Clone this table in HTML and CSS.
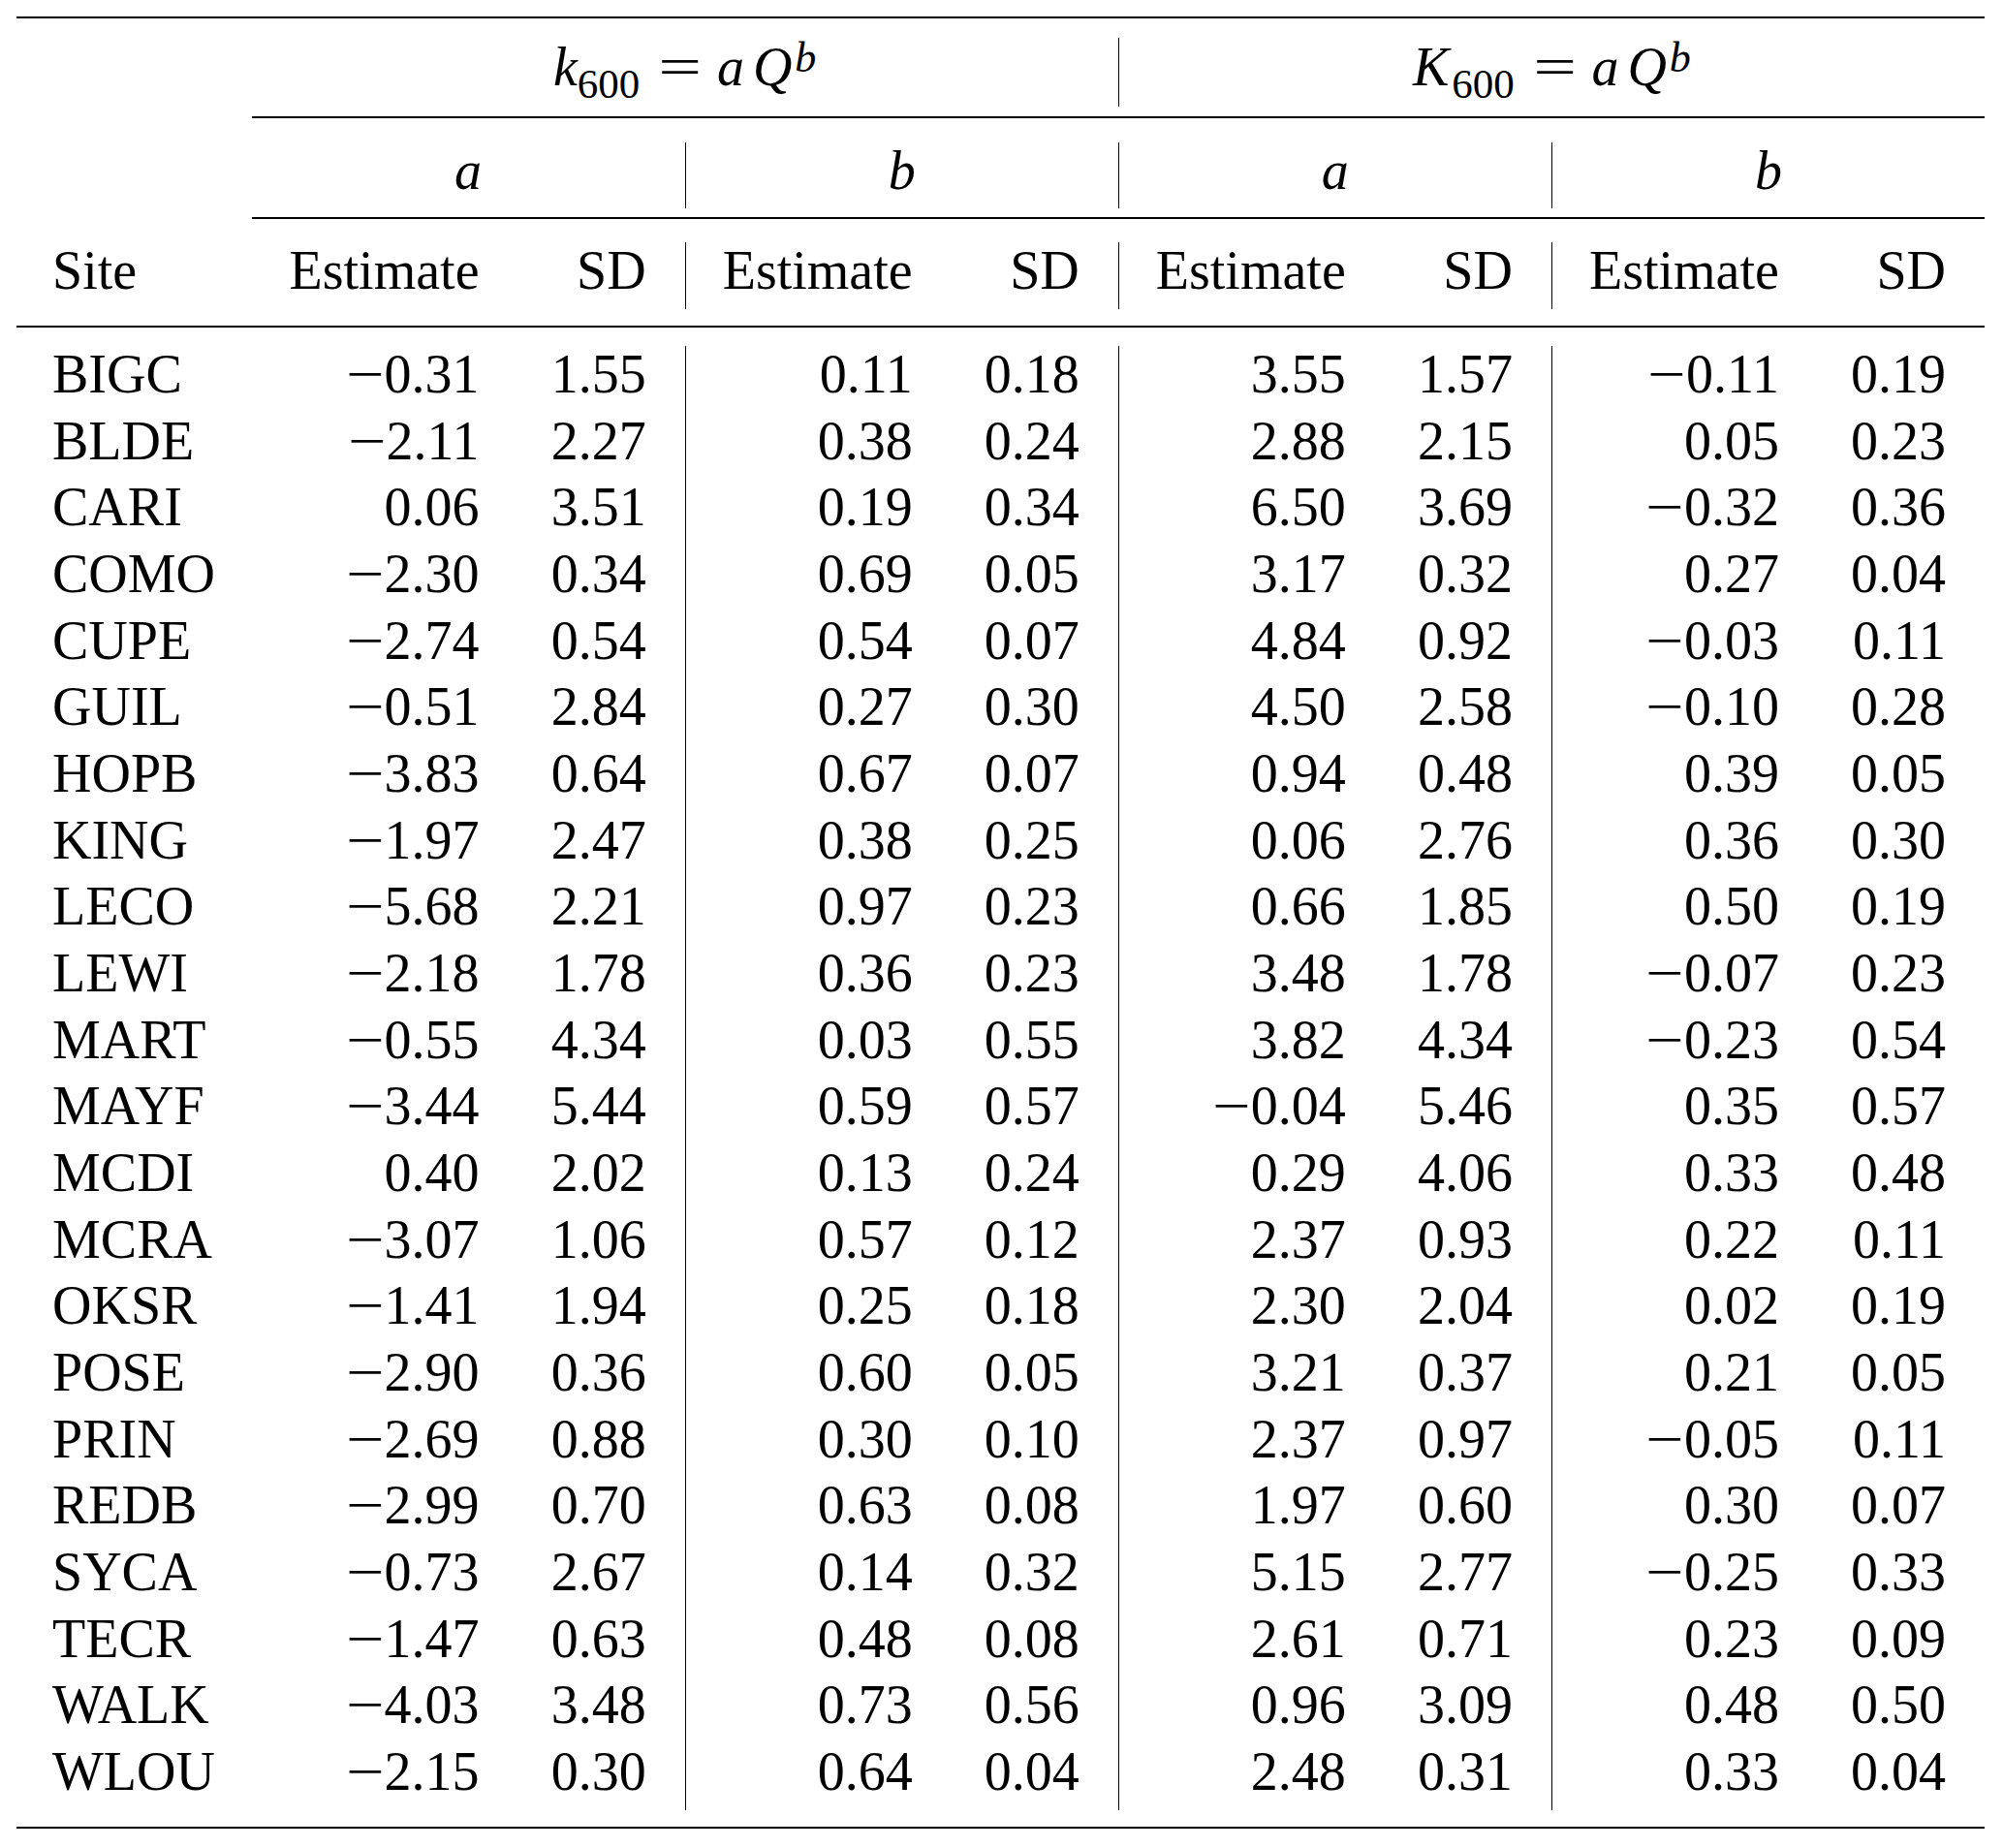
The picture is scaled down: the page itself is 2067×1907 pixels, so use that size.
FILE: index.html
```html
<!DOCTYPE html>
<html lang="en">
<head>
<meta charset="utf-8">
<title>k600 and K600 regression coefficients</title>
<link rel="stylesheet" href="styles.css">
</head>
<body>
<div class="tbl">
  <div class="hrow">
    <div class="blank"></div>
    <div class="span-wrap">
      <div class="f"><span class="math"><i>k</i><span class="sb">600</span><span class="eq">=</span><i>a</i><i class="q">Q</i><i class="sp">b</i></span></div>
      <div class="f vl"><span class="math"><i>K</i><span class="sb sbk">600</span><span class="eq">=</span><i>a</i><i class="q">Q</i><i class="sp">b</i></span></div>
    </div>
  </div>
  <div class="hrow">
    <div class="blank"></div>
    <div class="grp-wrap">
      <div class="g">a</div>
      <div class="g vl">b</div>
      <div class="g vl">a</div>
      <div class="g vl">b</div>
    </div>
  </div>
  <div class="cols colhead">
    <div class="cell site">Site</div>
    <div class="cell e">Estimate</div><div class="cell s">SD</div>
    <div class="cell e vl">Estimate</div><div class="cell s">SD</div>
    <div class="cell e vl">Estimate</div><div class="cell s">SD</div>
    <div class="cell e vl">Estimate</div><div class="cell s">SD</div>
  </div>
  <div class="tbody">
    <div class="cols"><div class="cell site">BIGC</div><div class="cell e"><span class="mn">−</span>0.31</div><div class="cell s">1.55</div><div class="cell e vl">0.11</div><div class="cell s">0.18</div><div class="cell e vl">3.55</div><div class="cell s">1.57</div><div class="cell e vl"><span class="mn">−</span>0.11</div><div class="cell s">0.19</div></div>
    <div class="cols"><div class="cell site">BLDE</div><div class="cell e"><span class="mn">−</span>2.11</div><div class="cell s">2.27</div><div class="cell e vl">0.38</div><div class="cell s">0.24</div><div class="cell e vl">2.88</div><div class="cell s">2.15</div><div class="cell e vl">0.05</div><div class="cell s">0.23</div></div>
    <div class="cols"><div class="cell site">CARI</div><div class="cell e">0.06</div><div class="cell s">3.51</div><div class="cell e vl">0.19</div><div class="cell s">0.34</div><div class="cell e vl">6.50</div><div class="cell s">3.69</div><div class="cell e vl"><span class="mn">−</span>0.32</div><div class="cell s">0.36</div></div>
    <div class="cols"><div class="cell site">COMO</div><div class="cell e"><span class="mn">−</span>2.30</div><div class="cell s">0.34</div><div class="cell e vl">0.69</div><div class="cell s">0.05</div><div class="cell e vl">3.17</div><div class="cell s">0.32</div><div class="cell e vl">0.27</div><div class="cell s">0.04</div></div>
    <div class="cols"><div class="cell site">CUPE</div><div class="cell e"><span class="mn">−</span>2.74</div><div class="cell s">0.54</div><div class="cell e vl">0.54</div><div class="cell s">0.07</div><div class="cell e vl">4.84</div><div class="cell s">0.92</div><div class="cell e vl"><span class="mn">−</span>0.03</div><div class="cell s">0.11</div></div>
    <div class="cols"><div class="cell site">GUIL</div><div class="cell e"><span class="mn">−</span>0.51</div><div class="cell s">2.84</div><div class="cell e vl">0.27</div><div class="cell s">0.30</div><div class="cell e vl">4.50</div><div class="cell s">2.58</div><div class="cell e vl"><span class="mn">−</span>0.10</div><div class="cell s">0.28</div></div>
    <div class="cols"><div class="cell site">HOPB</div><div class="cell e"><span class="mn">−</span>3.83</div><div class="cell s">0.64</div><div class="cell e vl">0.67</div><div class="cell s">0.07</div><div class="cell e vl">0.94</div><div class="cell s">0.48</div><div class="cell e vl">0.39</div><div class="cell s">0.05</div></div>
    <div class="cols"><div class="cell site">KING</div><div class="cell e"><span class="mn">−</span>1.97</div><div class="cell s">2.47</div><div class="cell e vl">0.38</div><div class="cell s">0.25</div><div class="cell e vl">0.06</div><div class="cell s">2.76</div><div class="cell e vl">0.36</div><div class="cell s">0.30</div></div>
    <div class="cols"><div class="cell site">LECO</div><div class="cell e"><span class="mn">−</span>5.68</div><div class="cell s">2.21</div><div class="cell e vl">0.97</div><div class="cell s">0.23</div><div class="cell e vl">0.66</div><div class="cell s">1.85</div><div class="cell e vl">0.50</div><div class="cell s">0.19</div></div>
    <div class="cols"><div class="cell site">LEWI</div><div class="cell e"><span class="mn">−</span>2.18</div><div class="cell s">1.78</div><div class="cell e vl">0.36</div><div class="cell s">0.23</div><div class="cell e vl">3.48</div><div class="cell s">1.78</div><div class="cell e vl"><span class="mn">−</span>0.07</div><div class="cell s">0.23</div></div>
    <div class="cols"><div class="cell site">MART</div><div class="cell e"><span class="mn">−</span>0.55</div><div class="cell s">4.34</div><div class="cell e vl">0.03</div><div class="cell s">0.55</div><div class="cell e vl">3.82</div><div class="cell s">4.34</div><div class="cell e vl"><span class="mn">−</span>0.23</div><div class="cell s">0.54</div></div>
    <div class="cols"><div class="cell site">MAYF</div><div class="cell e"><span class="mn">−</span>3.44</div><div class="cell s">5.44</div><div class="cell e vl">0.59</div><div class="cell s">0.57</div><div class="cell e vl"><span class="mn">−</span>0.04</div><div class="cell s">5.46</div><div class="cell e vl">0.35</div><div class="cell s">0.57</div></div>
    <div class="cols"><div class="cell site">MCDI</div><div class="cell e">0.40</div><div class="cell s">2.02</div><div class="cell e vl">0.13</div><div class="cell s">0.24</div><div class="cell e vl">0.29</div><div class="cell s">4.06</div><div class="cell e vl">0.33</div><div class="cell s">0.48</div></div>
    <div class="cols"><div class="cell site">MCRA</div><div class="cell e"><span class="mn">−</span>3.07</div><div class="cell s">1.06</div><div class="cell e vl">0.57</div><div class="cell s">0.12</div><div class="cell e vl">2.37</div><div class="cell s">0.93</div><div class="cell e vl">0.22</div><div class="cell s">0.11</div></div>
    <div class="cols"><div class="cell site">OKSR</div><div class="cell e"><span class="mn">−</span>1.41</div><div class="cell s">1.94</div><div class="cell e vl">0.25</div><div class="cell s">0.18</div><div class="cell e vl">2.30</div><div class="cell s">2.04</div><div class="cell e vl">0.02</div><div class="cell s">0.19</div></div>
    <div class="cols"><div class="cell site">POSE</div><div class="cell e"><span class="mn">−</span>2.90</div><div class="cell s">0.36</div><div class="cell e vl">0.60</div><div class="cell s">0.05</div><div class="cell e vl">3.21</div><div class="cell s">0.37</div><div class="cell e vl">0.21</div><div class="cell s">0.05</div></div>
    <div class="cols"><div class="cell site">PRIN</div><div class="cell e"><span class="mn">−</span>2.69</div><div class="cell s">0.88</div><div class="cell e vl">0.30</div><div class="cell s">0.10</div><div class="cell e vl">2.37</div><div class="cell s">0.97</div><div class="cell e vl"><span class="mn">−</span>0.05</div><div class="cell s">0.11</div></div>
    <div class="cols"><div class="cell site">REDB</div><div class="cell e"><span class="mn">−</span>2.99</div><div class="cell s">0.70</div><div class="cell e vl">0.63</div><div class="cell s">0.08</div><div class="cell e vl">1.97</div><div class="cell s">0.60</div><div class="cell e vl">0.30</div><div class="cell s">0.07</div></div>
    <div class="cols"><div class="cell site">SYCA</div><div class="cell e"><span class="mn">−</span>0.73</div><div class="cell s">2.67</div><div class="cell e vl">0.14</div><div class="cell s">0.32</div><div class="cell e vl">5.15</div><div class="cell s">2.77</div><div class="cell e vl"><span class="mn">−</span>0.25</div><div class="cell s">0.33</div></div>
    <div class="cols"><div class="cell site">TECR</div><div class="cell e"><span class="mn">−</span>1.47</div><div class="cell s">0.63</div><div class="cell e vl">0.48</div><div class="cell s">0.08</div><div class="cell e vl">2.61</div><div class="cell s">0.71</div><div class="cell e vl">0.23</div><div class="cell s">0.09</div></div>
    <div class="cols"><div class="cell site">WALK</div><div class="cell e"><span class="mn">−</span>4.03</div><div class="cell s">3.48</div><div class="cell e vl">0.73</div><div class="cell s">0.56</div><div class="cell e vl">0.96</div><div class="cell s">3.09</div><div class="cell e vl">0.48</div><div class="cell s">0.50</div></div>
    <div class="cols"><div class="cell site">WLOU</div><div class="cell e"><span class="mn">−</span>2.15</div><div class="cell s">0.30</div><div class="cell e vl">0.64</div><div class="cell s">0.04</div><div class="cell e vl">2.48</div><div class="cell s">0.31</div><div class="cell e vl">0.33</div><div class="cell s">0.04</div></div>
  </div>
</div>
</body>
</html>
```

FILE: styles.css
```css
* {
  box-sizing: border-box;
  margin: 0;
  padding: 0;
}

html,
body {
  background: #ffffff;
}

body {
  margin: 0;
  font-family: "Liberation Serif", "Times New Roman", serif;
  font-size: 56px;
  color: #000000;
}

.tbl {
  width: 2031px;
  margin: 17px 0 0 17px;
  border-top: 2px solid #000000;
  border-bottom: 2px solid #000000;
}

.hrow {
  display: grid;
  grid-template-columns: 242.5px 1fr;
}

.span-wrap {
  display: grid;
  grid-template-columns: 1fr 1fr;
  padding: 20px 0 9.7px;
  border-bottom: 2px solid #000000;
}

.grp-wrap {
  display: grid;
  grid-template-columns: repeat(4, 1fr);
  padding: 25px 0 8.62px;
  border-bottom: 2px solid #000000;
}

.vl {
  border-left: 1px solid #000000;
}

.f {
  height: 71px;
  line-height: 60px;
  text-align: center;
  white-space: nowrap;
}

.math i {
  font-style: italic;
}

.sb {
  font-size: 43px;
  line-height: 0;
  vertical-align: -13.4px;
  font-style: normal;
}

.sbk {
  margin-left: 3px;
}

.eq {
  display: inline-block;
  transform: scaleX(1.42);
  margin: 0 22px 0 26px;
}

.q {
  margin-left: 9px;
}

.sp {
  font-size: 44px;
  line-height: 0;
  vertical-align: 14px;
  margin-left: 3px;
}

.g {
  line-height: 58px;
  padding-bottom: 10.68px;
  text-align: center;
  font-style: italic;
}

.cols {
  display: grid;
  grid-template-columns: 242.5px repeat(4, 235px 212.125px);
}

.colhead {
  padding: 24px 0 17.62px;
  border-bottom: 2px solid #000000;
}

.tbody {
  padding: 18.7px 0 17.74px;
}

.cell {
  line-height: 58px;
  padding-bottom: 10.68px;
  text-align: right;
  white-space: nowrap;
}

.site {
  text-align: left;
  padding-left: 37px;
}

.s {
  padding-right: 40px;
}

.mn {
  display: inline-block;
  transform: scaleX(1.25);
  margin-right: 4px;
}
```
